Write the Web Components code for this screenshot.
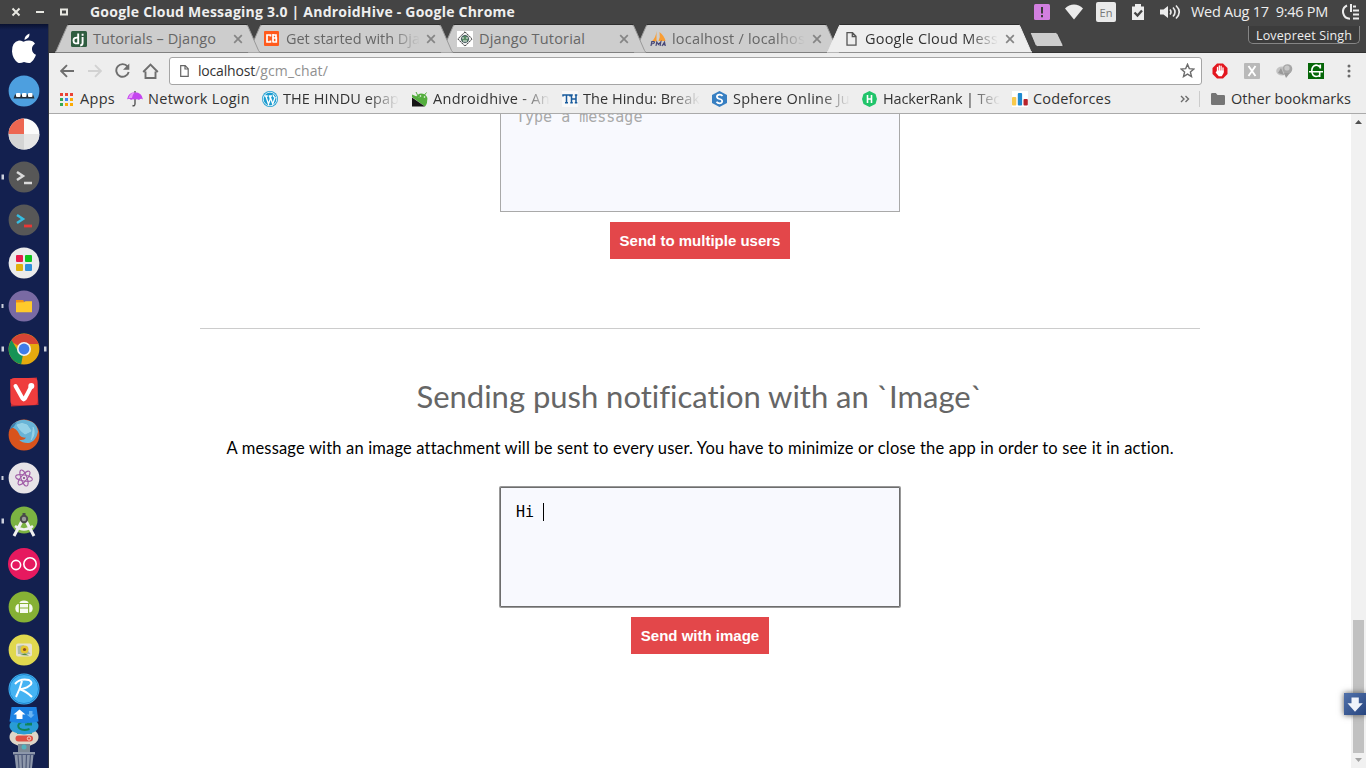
<!DOCTYPE html>
<html lang="en">
<head>
<meta charset="utf-8">
<title>Google Cloud Messaging 3.0 | AndroidHive</title>
<style>
html,body{margin:0;height:100%;overflow:hidden;background:#fff}
body{font-family:"Open Sans","Noto Sans",sans-serif}
</style>
</head>
<body>
<desk-shell></desk-shell>
<script>
const ICONS = {
  winclose:[16,16,'<path d="M4.5 4.5l7 7m0-7l-7 7" stroke="#e8e8e2" stroke-width="2"/>'],
  winmin:[16,16,'<path d="M4 8h8" stroke="#e8e8e2" stroke-width="2"/>'],
  winmax:[16,16,'<rect x="5" y="5.5" width="6" height="5" fill="none" stroke="#e8e8e2" stroke-width="2"/>'],
  alert:[16,16,'<rect width="16" height="16" rx="1.5" fill="#d27fe0"/><path d="M8 3v6.5M8 11v2.2" stroke="#3c3c3c" stroke-width="2"/>'],
  wifi:[18,16,'<path d="M9 15.5L0 4.5C5-.8 13-.8 18 4.500z" fill="#ececec"/>'],
  clip:[12,16,'<path d="M0 2.500h3V0h6v2.500h3V16H0z" fill="#ececec"/><path d="M2.500 8.500l3 3L10 6.500" fill="none" stroke="#444" stroke-width="2.300"/>'],
  sound:[21,16,'<path d="M0 5.500h3.500L8 2v12L3.500 10.500H0z" fill="#ececec"/><path d="M10 5.500q2 2.500 0 5M13 3.500q4 4.500 0 9M16 1.500q6.500 6.500 0 13" fill="none" stroke="#ececec" stroke-width="1.600"/>'],
  session:[18,16,'<path d="M5 1.500A7 7 0 0 0 8 14.800M9 0v8" fill="none" stroke="#ececec" stroke-width="2"/><path d="M11 2.500h3M11 6.500h6M11 10.500h6M11 14.500h6" stroke="#ececec" stroke-width="1.800"/>'],
  dj:[16,16,'<rect width="16" height="16" rx="1.500" fill="#2f5d40"/><path d="M7.200 2.500v9.700q-4.700 1-4.700-2.700 0-3.500 4.700-2.700M11.600 6v6q0 2.200-2.400 2.500M11.600 2.800v2" fill="none" stroke="#fff" stroke-width="1.900"/>'],
  cb:[15,15,'<rect width="15" height="15" rx="1" fill="#ff5a1c"/><path d="M6.500 5.500V4H3v7h3.500V9.500M9 3v8.500M9 4h3v3H9m0 0h3.300v4H9" fill="none" stroke="#fff" stroke-width="1.700"/>'],
  diamond:[16,16,'<rect width="16" height="16" fill="#fff"/><path d="M8 .8L15.200 8 8 15.200.8 8z" fill="#eee" stroke="#333" stroke-dasharray="2 .6"/><circle cx="8" cy="8" r="3.600" fill="#5b8e68" stroke="#234" stroke-width=".7"/><path d="M5 7h2m2 0h2M6 10h4" stroke="#eee"/>'],
  pma:[17,16,'<path d="M6.500 0v10.500H1.500Q6 7 6.500 0zM9.500 1q5 4 6 9H8.500Q10.500 6 9.500 1z" fill="#f99d33"/><path d="M1 15l.8-4.300h2.400q1 1.700-2.600 2.200M6 15l.8-4 1.700 2.500 2.300-2.500-.7 4M12 15l2.500-4 .8 4M13 13.700h2" fill="none" stroke="#484878" stroke-width="1.200"/>'],
  page:[11,14,'<path d="M1 .7h5.500L10 4.200v9H1zM6.300.7v3.800H10" fill="none" stroke="#555" stroke-width="1.300"/>'],
  pagesm:[9,12,'<path d="M.7.700h4.500l3 3v7.600H.7zM5 .7V4h3.200" fill="none" stroke="#666" stroke-width="1.200"/>'],
  x:[10,10,'<path d="M1.200 1.200l7.600 7.600m0-7.600l-7.600 7.600" stroke="#858585" stroke-width="1.700"/>'],
  back:[14,14,'<path d="M14 7H1.500M7 1.200L1.200 7 7 12.800" fill="none" stroke="#6e6e6e" stroke-width="1.900"/>'],
  fwd:[14,14,'<path d="M0 7h12.500M7 1.200L12.800 7 7 12.800" fill="none" stroke="#d2d2d2" stroke-width="1.900"/>'],
  reload:[15,15,'<path d="M12.600 3.600A6.300 6.300 0 1 0 13.700 9" fill="none" stroke="#6e6e6e" stroke-width="1.900"/><path d="M14.300.5v6.300H8z" fill="#6e6e6e"/>'],
  home:[17,16,'<path d="M1.200 9L8.500 1.500 15.800 9M3.500 8.500V15h10V8.500" fill="none" stroke="#6e6e6e" stroke-width="1.900"/>'],
  star:[15,15,'<path d="M7.500 1.300l1.800 4.300 4.600.4-3.500 3 1.100 4.600-4-2.500-4 2.500 1.100-4.600-3.500-3 4.600-.4z" fill="none" stroke="#6c6c6c" stroke-width="1.400"/>'],
  stop:[16,16,'<path d="M5 .5h6L15.500 5v6L11 15.500H5L.5 11V5z" fill="#e3171f"/><path d="M5.500 9V4.500M7.300 8V2.800M9.100 8V3.200M11 9V4.800" stroke="#fff" stroke-width="1.300" stroke-linecap="round"/><path d="M5 7.500h6.600V10l-1.800 3.300H6.800L3.600 9.500l.7-.8z" fill="#fff"/>'],
  xbox:[16,16,'<rect width="16" height="16" rx="1" fill="#b9b9b9"/><path d="M4.500 3l7 10m0-10l-7 10" stroke="#fff" stroke-width="1.900"/>'],
  blobs:[17,16,'<ellipse cx="6" cy="8" rx="5.800" ry="4.500" fill="#c3c3c3"/><path d="M2 10l3-5 3 7z" fill="#999"/><circle cx="11.500" cy="6" r="4.800" fill="#a6a6a6"/><circle cx="11" cy="5" r="2.600" fill="#c8c8c8"/><path d="M8 10h6l-4 5z" fill="#999"/>'],
  gbox:[16,16,'<rect width="16" height="16" fill="#056608"/><path d="M12.300 1.500v4M12.300 4.500Q10.500 1.900 8 2.100 3.800 3 3.800 7.800 4 13.200 8 13.500q2.500 0 4-1.500M11.700 14V9M1 8.800h14" fill="none" stroke="#fff" stroke-width="1.600"/>'],
  dots:[4,14,'<g fill="#6a6a6a"><circle cx="2" cy="2" r="1.500"/><circle cx="2" cy="7" r="1.500"/><circle cx="2" cy="12" r="1.500"/></g>'],
  apps:[13,13,'<path d="M0 0h3v3H0zM5 0h3v3H5zM10 0h3v3h-3z" fill="#ea4335"/><path d="M0 5h3v3H0zM0 10h3v3H0z" fill="#34a853"/><path d="M5 5h3v3H5z" fill="#4285f4"/><path d="M10 5h3v3h-3zM5 10h3v3H5zM10 10h3v3h-3z" fill="#fbab05"/>'],
  umb:[16,16,'<path d="M0 8.500Q1 1.500 8 1.200q7 .3 8 7.300-2-1.500-4 .5-2-1.500-4 0-2-1.500-4 0-2-2-4-.5z" fill="#c445ef"/><path d="M5 7q1-5 3-5.500l-3 .5Q2 4 1.500 7z" fill="#e998fb"/><path d="M8 0v1.500M8 8.500V13q-.3 2.300-2.500 1.500" fill="none" stroke="#555" stroke-width="1.400"/>'],
  wp:[16,16,'<circle cx="8" cy="8" r="8" fill="#1b9cd0"/><circle cx="8" cy="8" r="6.800" fill="none" stroke="#fff" stroke-width=".8"/><path d="M2.500 5h3.300M6.700 5H10M3.800 5l2.700 8L8.300 8 7.600 5M8 5l2.700 8L13 6.500Q11 5.500 11 3.500" fill="none" stroke="#fff" stroke-width="1.300"/>'],
  droid:[16,16,'<path d="M0 3.500l7 3 8 .5q1 5-2 8.500L0 6z" fill="#54ae3e"/><path d="M4 6Q7 .5 13 3.500q2.500 2 2.500 5z" fill="#54ae3e"/><path d="M0 6.500l13 9H0z" fill="#151515"/><path d="M5.500 4L4 1M12.500 4l2-2.500" stroke="#54ae3e"/><circle cx="8.500" cy="5" r=".8" fill="#fff"/><circle cx="12.500" cy="6" r=".8" fill="#fff"/>'],
  th:[16,16,'<rect width="16" height="16" fill="#f8f8f8"/><path d="M1 5.500V4h7v1.500M4.500 4v8M3 11.800h3M9.500 4v8M14 4v8M9.500 8H14M8.300 4h2.500M12.800 4h2.500M8.300 11.800h2.500M12.800 11.800h2.500" fill="none" stroke="#175a9c" stroke-width="1.500"/>'],
  sph:[15,16,'<path d="M7.500 0L15 4v8l-7.500 4L0 12V4z" fill="#377fc2"/><path d="M10.500 5Q9.500 3.500 7.500 3.700 4.700 4 4.900 6q.3 1.500 2.700 2 2.700.6 2.600 2.300-.3 2-2.700 2-2 0-3-1.500" fill="none" stroke="#fff" stroke-width="1.700"/>'],
  hr:[15,16,'<path d="M7.500 0l6 3L15 8l-1.500 5-6 3-6-3L0 8l1.500-5z" fill="#20c46a"/><path d="M5.500 4v8m4-8v8M5.500 8h4" stroke="#fff" stroke-width="1.600"/>'],
  cf:[16,16,'<rect width="16" height="16" fill="#fff"/><rect x="0" y="6" width="4.300" height="8.500" rx="1" fill="#f8c94b"/><rect x="5.800" y="2" width="4.300" height="12.500" rx="1" fill="#1f8ad0"/><rect x="11.500" y="8" width="4.300" height="6.500" rx="1" fill="#b8222b"/>'],
  more:[10,8,'<path d="M1 1l3 3-3 3M5.500 1l3 3-3 3" fill="none" stroke="#6c6c6c" stroke-width="1.400"/>'],
  folder:[14,12,'<path d="M0 1.200Q0 0 1.200 0h3.600l1.700 2h6.300Q14 2 14 3.200v7.600Q14 12 12.800 12H1.200Q0 12 0 10.800z" fill="#757575"/>'],
  up:[7,4,'<path d="M3.500 0L7 4H0z" fill="#505050"/>'],
  down:[7,4,'<path d="M3.500 4L7 0H0z" fill="#a3a3a3"/>'],
  dl:[22,22,'<defs><linearGradient id="b" x2="1" y2="1"><stop stop-color="#5272ab"/><stop offset="1" stop-color="#27457f"/></linearGradient></defs><rect width="22" height="22" fill="url(#b)"/><path d="M7.500 4.500h7.300v5.700h4L11 18.700 3.500 10.200h4z" fill="#f0f3fa"/>']
};
/* Dock glyphs share a 48x43 cell with their centre at 24,22. */
const disc=(c,r=15.400)=>`<circle cx="24" cy="22" r="${r}" fill="${c}"/>`;
const DOCK=[
 '<path d="M29.500 7.500q.3 4.500-5 6.500Q24.300 9.500 29.500 7.500zM19 14.500q2 0 4.500 1.200Q26 14.500 29 14.500q4 0 6 3.200-3.500 2.500-3 6 .5 3.500 4 5-2 5.500-5.500 8-2 .8-6.500-.8-3.500 1.600-6 .8Q12.500 33 12 25.500q-.3-9.500 7-11z" fill="#fff"/>',
 disc('#4d9fdf')+'<path d="M15 25.500h18l1.500 4h-21z" fill="#262d35"/><rect x="16" y="24" width="4.500" height="4" rx="1" fill="#fff"/><rect x="22" y="24" width="4.500" height="4" rx="1" fill="#fff"/><rect x="28" y="24" width="4.500" height="4" rx="1" fill="#fff"/>',
 disc('#fbfbfb')+'<path d="M24 22V6.600A15.400 15.400 0 0 0 8.600 22z" fill="#ed6651"/><path d="M8.600 22H24v15.400A15.400 15.400 0 0 1 8.600 22z" fill="#d4d4d4"/><path d="M39.400 22H24v15.400A15.400 15.400 0 0 0 39.400 22z" fill="#e6e6e6"/>',
 disc('#575757')+'<path d="M17 17l6 4-6 4" fill="none" stroke="#dadada" stroke-width="2.500"/><path d="M24 28h8" stroke="#dadada" stroke-width="2.500"/><rect x="1.500" y="19.500" width="2.500" height="5" fill="#ccd0dc"/>',
 disc('#575757')+'<path d="M17 17l6 4-6 4" fill="none" stroke="#35bde1" stroke-width="2.500"/><path d="M24 28h8" stroke="#ea3836" stroke-width="2.800"/>',
 disc('#ebebeb')+'<rect x="16" y="14" width="7" height="7" rx="1" fill="#e71d4c"/><rect x="25" y="14" width="7" height="7" rx="1" fill="#0fc51c"/><rect x="16" y="23" width="7" height="7" rx="1" fill="#e1b10b"/><rect x="25" y="23" width="7" height="7" rx="1" fill="#2f8fda"/>',
 disc('#796aa3')+'<path d="M16 16h7l1.500 2H32v10H16z" fill="#f19118"/><path d="M16 18.500l8-.2 1.500-1H32v11H16z" fill="#ffca2b"/><rect x="1.500" y="20" width="2" height="4" fill="#ccd0dc"/>',
 disc('#e4aa0e')+'<path d="M24 22L10.660 14.300A15.400 15.400 0 0 1 37.300 14.300L38.500 17H24z" fill="#d64435"/><path d="M24 22l-2.800 15.150A15.400 15.400 0 0 1 11.500 13l7 12 5 3z" fill="#159355"/><circle cx="24" cy="22" r="7" fill="#f3f3f3"/><circle cx="24" cy="22" r="5.400" fill="#3f7ce8"/><rect x="1.500" y="19.500" width="2.500" height="5" fill="#ccd0dc"/><rect x="44" y="19.500" width="2.500" height="5" fill="#ccd0dc"/>',
 '<path d="M10 9l27-1.500L38.500 35 11 36.500z" fill="#c02c35"/><rect x="10.500" y="8" width="27" height="27" rx="4" fill="#ef3d3d"/><path d="M15.500 16l7 12.500q1.200 1.800 2.400 0L31.500 16" fill="none" stroke="#fff" stroke-width="4" stroke-linecap="round"/><circle cx="31.300" cy="16" r="3" fill="#fff"/>',
 disc('#d8531c')+'<path d="M10.500 14Q15 7 24 6.700q13 1 14 12-2 9-8 11-7 1-11-3 5 1 7-2-6 0-7-4-2-5-8.500-6.700z" fill="#68b4d7"/><path d="M17 12q5-3 10 0l4 6-6 3q-5-3-8-9zM33 14q3 7-2 13" fill="#94d1e8" stroke="#9ad3e7"/><path d="M9.500 17Q11 11.500 17 8.500l-3 5z" fill="#3b7fae"/>',
 disc('#e7e4e8')+'<g fill="none" stroke="#a05ca7" stroke-width="1"><ellipse cx="24" cy="22" rx="3" ry="8.500" transform="rotate(-20 24 22)"/><ellipse cx="24" cy="22" rx="3" ry="8.500" transform="rotate(40 24 22)"/><ellipse cx="24" cy="22" rx="3" ry="8.500" transform="rotate(100 24 22)"/></g><circle cx="24" cy="22" r="1" fill="#7c3b88"/><rect x="1.500" y="20" width="2" height="4" fill="#ccd0dc"/>',
 '<circle cx="24" cy="21" r="13.500" fill="#7cb342"/><path d="M22 22L14 37M26 22l8 15" stroke="#f0f0f0" stroke-width="3"/><path d="M15 27q9 7 18 0" fill="none" stroke="#f0f0f0" stroke-width="2.500"/><path d="M24 14v4" stroke="#4a4a4a" stroke-width="3"/><circle cx="24" cy="20" r="3.200" fill="#999" stroke="#4a4a4a" stroke-width="2"/><rect x="1.500" y="19.500" width="2.500" height="5" fill="#ccd0dc"/>',
 disc('#e6195f',16)+'<circle cx="16" cy="23" r="4.600" fill="none" stroke="#fff" stroke-width="1.600"/><circle cx="30" cy="22" r="6.200" fill="none" stroke="#fff" stroke-width="1.600"/>',
 disc('#86b135')+'<path d="M19.500 18Q19.500 15.500 24 15.500t4.500 2.500zM20 19h8v3.500h-8zM20 23.500h8V28h-8zM18.800 19v8.500q-3.300 0-3.500-4 .3-4.500 3.500-4.500zM29.200 19v8.500q3.300 0 3.500-4-.3-4.500-3.500-4.500z" fill="#f6faf1"/>',
 disc('#e0d84f')+'<rect x="16" y="15.500" width="16" height="13" rx="2" fill="#e6e1d1"/><path d="M17.500 18l6-1 7 9H18z" fill="#abbaa9"/><circle cx="24.500" cy="21.500" r="4" fill="#e6c72e"/><circle cx="24.500" cy="21.500" r="1.600" fill="#8f4e22"/><path d="M20 27l5-1.500 4 2z" fill="#538c40"/>'
];
const STACK='<circle cx="24" cy="18" r="15.500" fill="#45b3f3"/><circle cx="24" cy="18" r="14.500" fill="none" stroke="#2089d2"/><path d="M15 13q5-6 14-4 5 3 0 6-4 3-10 3 7 2 13 8M22 10q-2 8-6 16" fill="none" stroke="#fff" stroke-width="2"/>'+
 '<ellipse cx="24" cy="66" rx="14.500" ry="9.500" fill="#ddd6c8"/><rect x="15.500" y="64.500" width="17.500" height="6" rx="3" fill="#df5144"/><circle cx="29" cy="67.500" r="1.700" fill="none" stroke="#f5d2c5"/><path d="M17 62h15" stroke="#4ba969" stroke-width="2"/>'+
 '<ellipse cx="24" cy="55" rx="14.500" ry="8.500" fill="#299cd5"/><path d="M29.500 53q-4-4-9-1.500-4 3-1 6 4 2.500 10 .5M25 53.500h6V50" fill="none" stroke="#10845a" stroke-width="2"/>'+
 '<path d="M11.500 36h25l2 14.500q-14 3-29 0z" fill="#1d83e4"/><path d="M19.500 38.500l6 5h-3V48h-6v-4.500h-3z" fill="#fff"/><path d="M29 40h3.500v3.500h2L31 47l-4.500-3.500H29z" fill="#69b5f4"/>'+
 '<path d="M18 73h12v8H18z" fill="#7d8894"/><circle cx="24" cy="76" r="2.500" fill="#52b2bd"/><path d="M13 81h22v2.500H13zM14.500 84h19l-1.500 13H16z" fill="#8d97aa"/><path d="M18 84l1 13M22 84l.5 13M26.500 84l-.5 13M30.500 84l-1 13" stroke="#4f5a78" stroke-width="1.200"/>';

function define(name, html, setup){
  const t=document.createElement('template'); t.innerHTML=html;
  customElements.define(name, class extends HTMLElement{
    connectedCallback(){
      if(this.shadowRoot) return;
      this.attachShadow({mode:'open'}).appendChild(t.content.cloneNode(true));
      if(setup) setup(this,this.shadowRoot);
    }
  });
}
const svg=(w,h,b)=>`<svg width="${w}" height="${h}" viewBox="0 0 ${w} ${h}">${b}</svg>`;

define('ui-icon','<style>:host{display:block;flex:none}svg{display:block}</style><div></div>',(el,r)=>{
  const [w,h,b]=ICONS[el.getAttribute('name')];
  r.querySelector('div').innerHTML=svg(w,h,b);
});
/* One line of text tracked to a set width; "fade" dims its right end. */
define('fit-text',`<style>:host{display:block;flex:none;white-space:pre;overflow:visible}
:host([fade]){-webkit-mask-image:linear-gradient(90deg,#000 calc(100% - 30px),transparent);mask-image:linear-gradient(90deg,#000 calc(100% - 30px),transparent)}
span{display:inline-block}</style><span><slot></slot></span>`,(el,r)=>{
  const w=+el.getAttribute('w'), s=r.querySelector('span');
  el.style.width=w+'px';
  s.style.letterSpacing=((w-s.getBoundingClientRect().width)/el.textContent.length)+'px';
});
define('top-panel',`<style>:host{display:flex;align-items:center;height:24px;background:#444;color:#eee;box-sizing:border-box;padding:0 6px 0 8px}
.t{margin:0 0 1px 18px;font:700 14px "Open Sans"}ui-icon+ui-icon{margin-left:8px}.sp{flex:1}
.en{width:20px;height:20px;background:#e9e9e9;border-radius:2px;color:#777;display:flex;align-items:center;justify-content:center;font-size:11px;margin:0 16px 0 13px}
.d{font-size:14.500px;margin:0 14px 1px 10px}</style>
<ui-icon name="winclose"></ui-icon><ui-icon name="winmin"></ui-icon><ui-icon name="winmax"></ui-icon>
<fit-text class="t" w="425">Google Cloud Messaging 3.0 | AndroidHive - Google Chrome</fit-text><div class="sp"></div>
<ui-icon name="alert"></ui-icon><ui-icon name="wifi" style="margin-left:15px"></ui-icon><div class="en">En</div><ui-icon name="clip"></ui-icon><ui-icon name="sound" style="margin-left:16px"></ui-icon>
<fit-text class="d" w="137">Wed Aug 17  9:46 PM</fit-text><ui-icon name="session"></ui-icon>`);
define('side-dock','<style>:host{display:block;width:48px;height:744px;background:linear-gradient(#091130,#13204f 6px);border-right:1px solid #30343f;box-sizing:content-box;overflow:hidden}div{display:flex;flex-direction:column;padding-top:2px}svg{display:block;flex:none}</style><div></div>',(el,r)=>{
  r.querySelector('div').innerHTML=DOCK.map(b=>svg(48,43,b)).join('')+svg(48,97,STACK);
});
define('browser-tab',`<style>:host{display:grid;width:205px;height:29px;margin-right:-12px;flex:none;position:relative;color:#666}
:host([active]){color:#333;z-index:9}
svg,.c{grid-area:1/1}.c{display:flex;align-items:center;padding:0 17px 0 16px;min-width:0}.i{width:22px;flex:none}.sp{flex:1}
:host([active]) .i{box-sizing:border-box;padding-left:3px}
::slotted(fit-text){font-size:14.500px;margin-bottom:1px}</style>
<svg width="205" height="29"><path class="f" d="M0 28.500L1.500 26.500 12 2.500Q12.700.5 14.500.5H190.500Q192.300.5 193 2.500L203.500 26.500 205 28.500" stroke="#999" /><path d="M13 .5H192" stroke="#2e2e2e"/></svg>
<div class="c"><div class="i"></div><slot></slot><div class="sp"></div><ui-icon name="x"></ui-icon></div>`,(el,r)=>{
  const f=r.querySelector('.f'), on=el.hasAttribute('active');
  f.setAttribute('fill',on?'#eee':'#cdcdcd');
  if(on) f.setAttribute('stroke','#eee');
  r.querySelector('.i').innerHTML=`<ui-icon name="${el.getAttribute('icon')}"></ui-icon>`;
});
define('tab-strip',`<style>:host{display:flex;height:29px;background:#444;padding-left:6px;position:relative;box-shadow:inset 0 -1px #333}
.n{margin:8px 0 0 9px}.u{margin-left:auto;margin-right:6px;margin-top:2px;width:112px;height:18px;box-sizing:border-box;border:1px solid #858585;border-top:0;border-radius:0 0 5px 5px;background:#3c3c3c;color:#eee;display:flex;align-items:center;justify-content:center;font-size:12.500px}.u fit-text{margin-top:1px}</style>
<browser-tab icon="dj" style="z-index:5"><fit-text w="123">Tutorials – Django</fit-text></browser-tab>
<browser-tab icon="cb" style="z-index:4"><fit-text fade w="134">Get started with Dja</fit-text></browser-tab>
<browser-tab icon="diamond" style="z-index:3"><fit-text w="106">Django Tutorial</fit-text></browser-tab>
<browser-tab icon="pma" style="z-index:2"><fit-text fade w="133">localhost / localhos</fit-text></browser-tab>
<browser-tab icon="page" active><fit-text fade w="133">Google Cloud Mess</fit-text></browser-tab>
<svg class="n" width="36" height="16"><path d="M1 .5H26.500Q28 .5 29 2.500L34 13Q34.500 14.500 33 14.500H8.500Q7 14.500 6 12.500z" fill="#cdcdcd" stroke="#333" stroke-width=".8"/></svg>
<div class="u"><fit-text w="96">Lovepreet Singh</fit-text></div>`);
define('tool-bar',`<style>:host{display:flex;align-items:center;height:35px;background:#eee;padding:0 15px 0 11px;color:#333}
.o{margin-left:10px;width:1033px;height:28px;box-sizing:border-box;border:1px solid #a5a5a5;border-radius:3px;background:#fff;display:flex;align-items:center;padding:0 6px 0 10px;font-size:14px}
.o ui-icon:first-child{margin-right:9px}.g{color:#909090}.o ui-icon:last-child{margin-left:auto}.g16{margin-left:16px}</style>
<ui-icon name="back"></ui-icon><ui-icon name="fwd" style="margin-left:14px"></ui-icon><ui-icon name="reload" style="margin-left:13px"></ui-icon><ui-icon name="home" style="margin:0 0 0 12px"></ui-icon>
<div class="o"><ui-icon name="pagesm"></ui-icon><fit-text w="57">localhost</fit-text><fit-text class="g" w="73">/gcm_chat/</fit-text><ui-icon name="star"></ui-icon></div>
<ui-icon name="stop" style="margin-left:10px"></ui-icon><ui-icon name="xbox" class="g16"></ui-icon><ui-icon name="blobs" class="g16"></ui-icon><ui-icon name="gbox" style="margin-left:15px"></ui-icon><ui-icon name="dots" style="margin-left:auto"></ui-icon>`);
define('bookmark-bar',`<style>:host{display:flex;align-items:center;height:25px;box-sizing:border-box;background:#eee;padding:0 15px 3px 11px;color:#333;font-size:14.500px}
div{display:flex;align-items:center;flex:none;height:20px}.i{width:21px}fit-text{margin-bottom:1px}.sep{width:1px;height:16px;background:#ccc;margin:0 11px 0 9px}</style>
<div style="width:67px"><ui-icon name="apps" style="margin-right:7px"></ui-icon><fit-text w="35">Apps</fit-text></div>
<div style="width:135px"><div class="i"><ui-icon name="umb"></ui-icon></div><fit-text w="102">Network Login</fit-text></div>
<div style="width:150px"><div class="i"><ui-icon name="wp"></ui-icon></div><fit-text fade w="116">THE HINDU epap</fit-text></div>
<div style="width:150px"><div class="i"><ui-icon name="droid"></ui-icon></div><fit-text fade w="117">Androidhive - An</fit-text></div>
<div style="width:150px"><div class="i"><ui-icon name="th"></ui-icon></div><fit-text fade w="117">The Hindu: Break</fit-text></div>
<div style="width:150px"><div class="i"><ui-icon name="sph"></ui-icon></div><fit-text fade w="117">Sphere Online Ju</fit-text></div>
<div style="width:150px"><div class="i"><ui-icon name="hr"></ui-icon></div><fit-text fade w="117">HackerRank | Tec</fit-text></div>
<div><div class="i"><ui-icon name="cf"></ui-icon></div><fit-text w="78">Codeforces</fit-text></div>
<div style="margin-left:auto"><ui-icon name="more"></ui-icon><i class="sep"></i><ui-icon name="folder" style="margin-right:6px"></ui-icon><fit-text w="120">Other bookmarks</fit-text></div>`);
define('message-box',`<style>:host{display:block;box-sizing:border-box;width:400px;height:120px;border:1px solid #a9a9a9;background:#f8f9fe;padding:15px;font:15px/18px "DejaVu Sans Mono",monospace;color:#a9a9a9;white-space:pre}
:host([focused]){border-color:#6d6d6d;color:#000;box-shadow:0 0 0 1px #999;border-radius:1px}
i{display:none}:host([focused]) i{display:inline-block;width:1px;height:18px;background:#000;vertical-align:top}</style><slot></slot><i></i>`);
define('send-button','<style>:host{display:flex;align-items:center;justify-content:center;height:37px;margin-top:10px;background:#e3474a;color:#fff;font:700 15px "Liberation Sans",sans-serif}</style><slot></slot>');
define('page-view',`<style>:host{display:flex;flex-direction:column;align-items:center;flex:1;min-width:0;height:654px;overflow:hidden;background:#fff}
:host>*{flex:none}hr{width:1000px;height:1px;border:0;background:#ccc;margin:69px 0 0}
h1{margin:46px 0 0;height:42px;font:400 31px/42px Lato,sans-serif;color:#666}
p{margin:19px 0 27px;height:24px;font:400 16.500px/24px Lato,sans-serif;color:#000}</style>
<message-box style="margin-top:-22px">Type a message</message-box><send-button style="width:180px">Send to multiple users</send-button><hr>
<h1><fit-text w="567">Sending push notification with an \`Image\`</fit-text></h1>
<p><fit-text w="947">A message with an image attachment will be sent to every user. You have to minimize or close the app in order to see it in action.</fit-text></p>
<message-box focused>Hi </message-box><send-button style="width:138px">Send with image</send-button>`);
define('scroll-rail',`<style>:host{display:flex;flex-direction:column;align-items:center;width:15px;height:654px;background:#f1f1f1;position:relative}
ui-icon:first-of-type{margin-top:6px}.t{width:11px;height:133px;background:#c1c1c1;margin-top:auto}.d{margin:5px 0 6px}
.b{position:absolute;right:0;top:579px;box-shadow:0 0 6px #555}</style>
<ui-icon name="up"></ui-icon><div class="t"></div><ui-icon name="down" class="d"></ui-icon><ui-icon name="dl" class="b"></ui-icon>`);
define('desk-shell',`<style>:host{display:block;width:1366px;height:768px;overflow:hidden}.m{display:flex}.w{flex:1;min-width:0}.p{display:flex}.l{height:1px;background:#aaa}</style>
<top-panel></top-panel><div class="m"><side-dock></side-dock><div class="w"><tab-strip></tab-strip><tool-bar></tool-bar><bookmark-bar></bookmark-bar><div class="l"></div><div class="p"><page-view></page-view><scroll-rail></scroll-rail></div></div></div>`);
</script>
</body>
</html>
